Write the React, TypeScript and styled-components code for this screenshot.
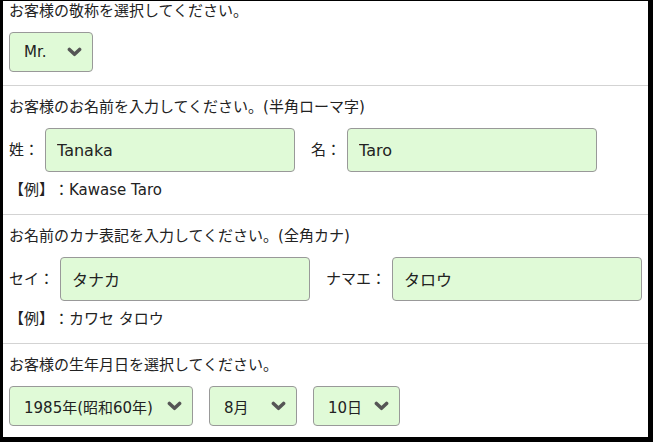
import React from 'react';
import styled, { createGlobalStyle } from 'styled-components';

const GlobalStyle = createGlobalStyle`
  html, body {
    margin: 0;
    padding: 0;
    background: #000;
  }
  body {
    font-family: 'DejaVu Sans', 'Noto Sans CJK JP', sans-serif;
    color: #222;
    text-spacing-trim: space-all;
  }
`;

const FONT = `'DejaVu Sans', 'Noto Sans CJK JP', sans-serif`;

type SelectProps = {
  value: string;
  width: number;
};
const Select = ({ value, width }: SelectProps) => {
  return (
    <SelectBox $w={width}>
      <span>{value}</span>
      <svg width="15" height="10" viewBox="0 0 15 10">
        <path d="M2.4 2.4 L7.5 7.3 L12.6 2.4" fill="none" stroke="#555" strokeWidth="3.5" strokeLinecap="round" strokeLinejoin="round" />
      </svg>
    </SelectBox>
  );
};

type FieldProps = {
  label: string;
  value: string;
};
const Field = ({ label, value }: FieldProps) => {
  return (
    <Pair>
      <Label>{label}</Label>
      <TextInput defaultValue={value} />
    </Pair>
  );
};

const App = () => {
  return (
    <Frame>
      <GlobalStyle />
      <Section $top>
        <Title>お客様の敬称を選択してください。</Title>
        <Row>
          <Select value="Mr." width={84} />
        </Row>
      </Section>

      <Section>
        <Title>お客様のお名前を入力してください。(半角ローマ字)</Title>
        <Row>
          <Field label="姓：" value="Tanaka" />
          <Field label="名：" value="Taro" />
        </Row>
        <Example>【例】：Kawase Taro</Example>
      </Section>

      <Section>
        <Title>お名前のカナ表記を入力してください。(全角カナ)</Title>
        <Row>
          <Field label="セイ：" value="タナカ" />
          <Field label="ナマエ：" value="タロウ" />
        </Row>
        <Example>【例】：カワセ タロウ</Example>
      </Section>

      <Section $last>
        <Title>お客様の生年月日を選択してください。</Title>
        <Row $gap={16}>
          <Select value="1985年(昭和60年)" width={184} />
          <Select value="8月" width={88} />
          <Select value="10日" width={87} />
        </Row>
      </Section>
    </Frame>
  );
};

const Frame = styled.div`
  width: 653px;
  height: 442px;
  box-sizing: border-box;
  border-style: solid;
  border-color: #000;
  border-width: 1px 5px 5px 3px;
  background: #fff;
  overflow: hidden;
`;

const Section = styled.section<{ $top?: boolean; $last?: boolean }>`
  padding: ${(p) => (p.$top ? '0' : '10px')} 6px 13px;
  margin-top: ${(p) => (p.$top ? '-1px' : '0')};
  border-bottom: ${(p) => (p.$last ? 'none' : '1px solid #d3d3d3')};
`;

const Title = styled.p`
  margin: 0 0 10px;
  font-size: 15px;
  line-height: 22px;
  white-space: nowrap;
`;

const Row = styled.div<{ $gap?: number }>`
  display: flex;
  align-items: center;
  gap: ${(p) => p.$gap || 0}px;
`;

const Pair = styled.div`
  display: flex;
  align-items: center;
  & + & {
    margin-left: 16px;
  }
`;

const Label = styled.span`
  font-size: 15px;
  line-height: 22px;
  margin-right: 6px;
  white-space: nowrap;
`;

const TextInput = styled.input`
  width: 250px;
  height: 44px;
  box-sizing: border-box;
  padding: 0 11px;
  border: 1px solid #999;
  border-radius: 4px;
  background: #e0fad7;
  font-family: ${FONT};
  font-size: 16px;
  color: #222;
  outline: none;
`;

const SelectBox = styled.div<{ $w: number }>`
  width: ${(p) => p.$w}px;
  height: 40px;
  box-sizing: border-box;
  display: flex;
  align-items: center;
  justify-content: space-between;
  padding: 0 10px 0 14px;
  border: 1px solid #999;
  border-radius: 4px;
  background: #e0fad7;
  font-size: 15px;
  white-space: nowrap;
  svg {
    flex-shrink: 0;
  }
`;

const Example = styled.div`
  margin-top: 7px;
  font-size: 15px;
  line-height: 22px;
`;

export default App;
